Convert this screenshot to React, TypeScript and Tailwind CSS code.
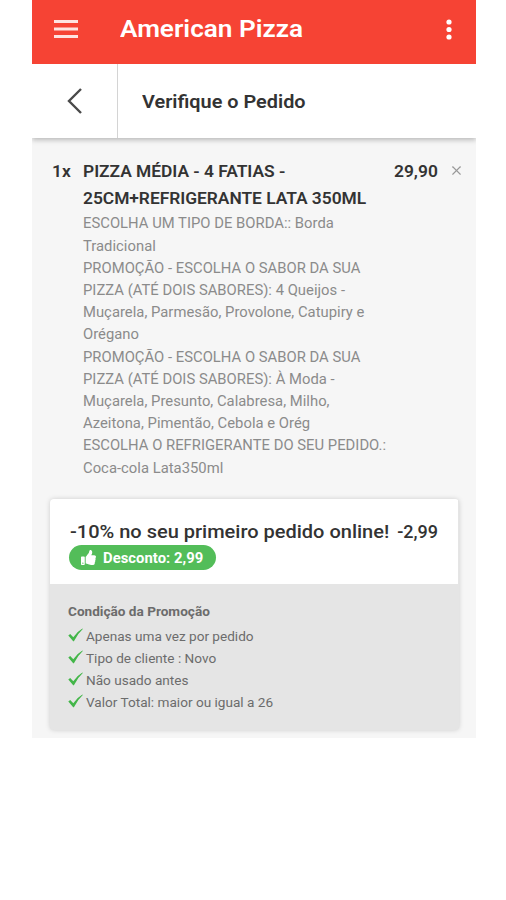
import { X } from 'lucide-react';
import { FaThumbsUp } from 'react-icons/fa';

const details = [
  'ESCOLHA UM TIPO DE BORDA:: Borda',
  'Tradicional',
  'PROMOÇÃO - ESCOLHA O SABOR DA SUA',
  'PIZZA (ATÉ DOIS SABORES): 4 Queijos -',
  'Muçarela, Parmesão, Provolone, Catupiry e',
  'Orégano',
  'PROMOÇÃO - ESCOLHA O SABOR DA SUA',
  'PIZZA (ATÉ DOIS SABORES): À Moda -',
  'Muçarela, Presunto, Calabresa, Milho,',
  'Azeitona, Pimentão, Cebola e Orég',
  'ESCOLHA O REFRIGERANTE DO SEU PEDIDO.:',
  'Coca-cola Lata350ml',
];

const conditions = [
  'Apenas uma vez por pedido',
  'Tipo de cliente : Novo',
  'Não usado antes',
  'Valor Total: maior ou igual a 26',
];

function Check() {
  return (
    <svg width="15" height="14" viewBox="0 0 15 14" className="mr-[3px] shrink-0 -translate-y-px">
      <path d="M0.3 7.6 L2.2 6 L5.3 9.3 Q8.8 3.9 14.4 0.6 L14.8 1.1 Q9.5 6 5.9 13.2 L5.2 13.2 Z" fill="#43b649" />
    </svg>
  );
}

export default function App() {
  return (
    <div className="min-h-[900px] w-[506px] bg-white font-['Roboto',sans-serif] text-[#333]">
      <div className="ml-8 flex h-[738px] w-[444px] flex-col bg-[#f6f6f6]">
        {/* App bar */}
        <header className="flex h-16 shrink-0 items-center bg-[#f64334] pb-[6px] text-white">
          <svg width="24" height="20" viewBox="0 0 24 20" className="ml-[22px]">
            <path d="M0 2.5H24M0 10H24M0 17.5H24" stroke="#fff" strokeOpacity="0.85" strokeWidth="3" />
          </svg>
          <h1 className="ml-[42px] origin-left scale-x-[1.09] text-[24px] font-semibold whitespace-nowrap">American Pizza</h1>
          <svg width="6" height="22" viewBox="0 0 6 22" fill="#fff" className="mr-6 ml-auto">
            <circle cx="3" cy="4" r="2.6" />
            <circle cx="3" cy="11.5" r="2.6" />
            <circle cx="3" cy="19" r="2.6" />
          </svg>
        </header>

        {/* Page title */}
        <div className="relative flex h-[74px] shrink-0 items-center bg-white shadow-[0_2px_5px_rgba(0,0,0,0.25)] [clip-path:inset(0_0_-10px_0)]">
          <div className="flex h-full w-[86px] items-center justify-center border-r border-[#d4d4d4]">
            <svg width="15" height="26" viewBox="0 0 15 26" fill="none">
              <path d="M14 1 L2 13 L14 25" stroke="#4a4a4a" strokeWidth="2.4" />
            </svg>
          </div>
          <h2 className="ml-[24px] origin-left scale-x-[1.104] text-[18px] font-semibold whitespace-nowrap">Verifique o Pedido</h2>
        </div>

        {/* Order item */}
        <div className="flex pt-[20px] pl-[20px] text-[17.4px] leading-[27px] font-semibold">
          <span className="w-[31px] shrink-0">1x</span>
          <div className="w-[311px] shrink-0 whitespace-nowrap">
            <div className="mb-[0.3px] tracking-[-0.03px]">
              <p>PIZZA MÉDIA - 4 FATIAS -</p>
              <p>25CM+REFRIGERANTE LATA 350ML</p>
            </div>
            <div className="text-[14.8px] leading-[22.2px] font-normal tracking-[0.02px] text-[#8b8b8b]">
              {details.map((line, i) => (
                <p key={i}>{line}</p>
              ))}
            </div>
          </div>
          <span className="w-[55px]">29,90</span>
          <X size={15} strokeWidth={1.8} className="mt-[5px] text-[#999]" />
        </div>

        {/* Promotion */}
        <div className="mt-[20.7px] ml-[18px] flex h-[231px] w-[409px] shrink-0 flex-col overflow-hidden rounded-[4px] bg-[#e5e5e5] shadow-[0_0_5px_rgba(0,0,0,0.17)]">
          <div className="h-[85px] w-[408px] bg-white pt-[20px] pl-[20px]">
            <div className="flex w-[368px] justify-between text-[18px] leading-[26px] font-medium whitespace-nowrap">
              <span className="origin-left scale-x-[1.111]">-10% no seu primeiro pedido online!</span>
              <span>-2,99</span>
            </div>
            <div className="-ml-px flex h-[25px] w-[147px] items-center rounded-full bg-[#53bd59] pl-3 text-[14.8px] font-bold tracking-[0.04px] whitespace-nowrap text-white">
              <FaThumbsUp size={15} className="mr-[7px]" />
              Desconto: 2,99
            </div>
          </div>
          <div className="pt-[16px] pl-[18px] text-[13.6px] leading-[22.2px] text-[#6c6c6c]">
            <p className="mb-[2px] font-bold">Condição da Promoção</p>
            {conditions.map((text) => (
              <p key={text} className="flex items-center whitespace-nowrap">
                <Check />
                <span>{text}</span>
              </p>
            ))}
          </div>
        </div>
      </div>
    </div>
  );
}
